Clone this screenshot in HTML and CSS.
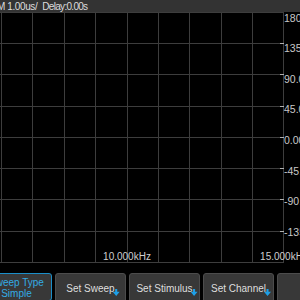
FILE: index.html
```html
<!DOCTYPE html>
<html lang="en">
<head>
  <meta charset="UTF-8">
  <title>Bode Plot</title>
  <link rel="stylesheet" href="styles.css">
</head>
<body>
  <div class="topbar">
    <span class="tb-scale">M 1.00us/</span>
    <span class="tb-delay">Delay:0.00s</span>
  </div>

  <div class="scope">
    <svg class="grid" width="284" height="252" viewBox="0 0 284 252" shape-rendering="crispEdges">
      <g stroke="#3d3d3d" stroke-width="1">
        <line x1="1.5" y1="0" x2="1.5" y2="251"/>
        <line x1="32.5" y1="0" x2="32.5" y2="251"/>
        <line x1="64.5" y1="0" x2="64.5" y2="251"/>
        <line x1="95.5" y1="0" x2="95.5" y2="251"/>
        <line x1="127.5" y1="0" x2="127.5" y2="251"/>
        <line x1="158.5" y1="0" x2="158.5" y2="251"/>
        <line x1="189.5" y1="0" x2="189.5" y2="251"/>
        <line x1="221.5" y1="0" x2="221.5" y2="251"/>
        <line x1="252.5" y1="0" x2="252.5" y2="251"/>
        <line x1="283.5" y1="0" x2="283.5" y2="251"/>
        <line x1="0" y1="0.5" x2="284" y2="0.5"/>
        <line x1="0" y1="31.5" x2="284" y2="31.5"/>
        <line x1="0" y1="62.5" x2="284" y2="62.5"/>
        <line x1="0" y1="94.5" x2="284" y2="94.5"/>
        <line x1="0" y1="125.5" x2="284" y2="125.5"/>
        <line x1="0" y1="156.5" x2="284" y2="156.5"/>
        <line x1="0" y1="187.5" x2="284" y2="187.5"/>
        <line x1="0" y1="219.5" x2="284" y2="219.5"/>
        <line x1="0" y1="250.5" x2="284" y2="250.5"/>
      </g>
      <!-- ticks for the phase axis -->
      <g stroke="#b0b0b0" stroke-width="1">
        <line x1="280" y1="31.5" x2="284" y2="31.5"/>
        <line x1="280" y1="62.5" x2="284" y2="62.5"/>
        <line x1="280" y1="94.5" x2="284" y2="94.5"/>
        <line x1="280" y1="125.5" x2="284" y2="125.5"/>
        <line x1="280" y1="156.5" x2="284" y2="156.5"/>
        <line x1="280" y1="187.5" x2="284" y2="187.5"/>
        <line x1="280" y1="219.5" x2="284" y2="219.5"/>
      </g>
    </svg>

    <div class="yaxis">
      <span class="tick tick-top">180.0</span>
      <span class="tick">135.0</span>
      <span class="tick">90.0</span>
      <span class="tick">45.0</span>
      <span class="tick">0.00</span>
      <span class="tick">-45.0</span>
      <span class="tick">-90.0</span>
      <span class="tick">-135.0</span>
      <span class="tick tick-hidden">-180.0</span>
    </div>

    <div class="xaxis">
      <span class="freq freq-mid">10.000kHz</span>
      <span class="freq freq-end">15.000kHz</span>
    </div>
  </div>

  <div class="softkeys">
    <div class="key key-active">Sweep Type<br>Simple</div>
    <div class="key"><span class="label sub">Set Sweep</span></div>
    <div class="key"><span class="label sub">Set Stimulus</span></div>
    <div class="key"><span class="label sub">Set Channel</span></div>
    <div class="key">
      <svg class="back" width="16" height="14" viewBox="0 0 16 14">
        <path d="M6 1 L1.5 5 L6 9" fill="none" stroke="#ececec" stroke-width="1.6"/>
        <path d="M2 5 H13 V12" fill="none" stroke="#ececec" stroke-width="1.6"/>
      </svg>
    </div>
  </div>
</body>
</html>
```

FILE: styles.css
```css
body {
  margin: 0;
  width: 300px;
  height: 300px;
  overflow: hidden;
  background: #000;
  font-family: "Liberation Sans", Arial, sans-serif;
  color: #d4d4d4;
}
.topbar {
  height: 12px;
  background: #333;
  display: flex;
  align-items: center;
  font-size: 10px;
  letter-spacing: -0.4px;
  color: #dcdcdc;
  white-space: nowrap;
}
.tb-scale {
  margin-left: -3px;
}
.tb-delay {
  margin-left: 5px;
  letter-spacing: -0.7px;
}
.scope {
  position: relative;
  height: 261px;
}
.grid {
  display: block;
}
.yaxis {
  position: absolute;
  left: 284px;
  top: 0;
  height: 251px;
  display: flex;
  flex-direction: column;
  justify-content: space-between;
  font-size: 10.5px;
  color: #c8c8c8;
  white-space: nowrap;
}
.tick {
  height: 1px;
  display: flex;
  align-items: center;
}
.tick-top {
  margin-top: 5px;
}
.tick-hidden {
  visibility: hidden;
}
.xaxis {
  position: absolute;
  left: 0;
  top: 239px;
  width: 284px;
  height: 12px;
  font-size: 10px;
  color: #cfcfcf;
  white-space: nowrap;
}
.freq {
  position: absolute;
  top: 0;
  transform: translateX(-50%);
}
.freq-mid {
  left: 127px;
}
.freq-end {
  left: 284px;
}
.softkeys {
  display: flex;
  gap: 3px;
  margin-left: -19px;
}
.key {
  flex-shrink: 0;
  width: 69px;
  height: 28px;
  background: #383838;
  border: 1px solid #4c4c4c;
  border-radius: 3px;
  display: flex;
  align-items: center;
  justify-content: center;
  text-align: center;
  font-size: 10px;
  line-height: 11px;
  color: #dedede;
}
.key-active {
  border-color: #1b8ec8;
  color: #34ace4;
  padding-top: 1px;
  box-sizing: border-box;
  width: 71px;
}
.label {
  position: relative;
  margin-top: 1px;
}
.sub::after {
  content: "";
  position: absolute;
  right: -5px;
  bottom: -2px;
  width: 7px;
  height: 7px;
  background: #1e9fe6;
  clip-path: polygon(35% 0, 65% 0, 65% 40%, 100% 40%, 50% 100%, 0 40%, 35% 40%);
}
.back {
  margin-left: 22px;
  margin-top: -2px;
}
```
